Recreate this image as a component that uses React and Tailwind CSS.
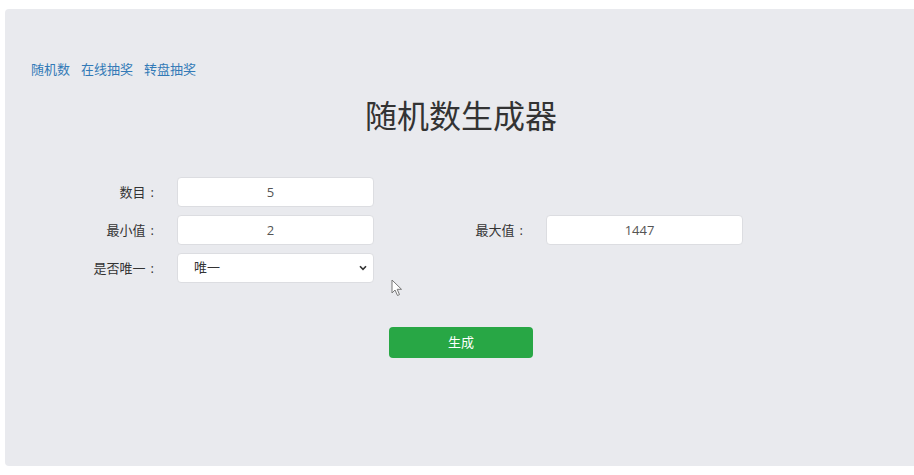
import React from "react";

const font = "font-['Open_Sans','Noto_Sans_CJK_SC',sans-serif]";

function Field({ label, children }) {
  return (
    <div className="flex w-[369px] items-center">
      <div className="w-[152px] pr-[1px] text-right text-[13px] leading-[18px] text-[#333]">
        {label}
        <span className="ml-[5px]">:</span>
      </div>
      <div className="ml-[22px] w-[197px]">{children}</div>
    </div>
  );
}

function TextInput({ value }) {
  return (
    <input
      type="text"
      defaultValue={value}
      className="box-border block h-[30px] w-[197px] rounded-[4px] border border-[#dcdde1] bg-white pr-[10px] text-center text-[13px] text-[#555] outline-none"
    />
  );
}

export default function App() {
  return (
    <div className={`h-[475px] w-full overflow-hidden bg-white pl-[5px] pt-[9px] ${font}`}>
      <div className="h-[457px] w-[912px] rounded-[4px] bg-[#e9eaee]">
        <div className="flex gap-[11px] pl-[26px] pt-[51px] text-[13px] leading-[18px] text-[#337ab7]">
          <a href="#">随机数</a>
          <a href="#">在线抽奖</a>
          <a href="#">转盘抽奖</a>
        </div>
        <h1 className="mt-[20px] text-center text-[32px] font-normal leading-[35px] text-[#333]">随机数生成器</h1>
        <div className="mt-[44px] flex flex-col gap-[8px]">
          <div className="flex">
            <Field label="数目">
              <TextInput value="5" />
            </Field>
          </div>
          <div className="flex">
            <Field label="最小值">
              <TextInput value="2" />
            </Field>
            <Field label="最大值">
              <TextInput value="1447" />
            </Field>
          </div>
          <div className="relative flex">
            <Field label="是否唯一">
              <div className="relative">
                <select className="box-border block h-[30px] w-[197px] appearance-none rounded-[4px] border border-[#dcdde1] bg-white pl-[16px] text-[13px] text-[#333] outline-none">
                  <option>唯一</option>
                  <option>不唯一</option>
                </select>
                <svg className="pointer-events-none absolute right-[7px] top-[12px]" width="8" height="6" viewBox="0 0 8 6">
                  <path d="M1 1.2 L4 4.4 L7 1.2" fill="none" stroke="#333" strokeWidth="1.6" />
                </svg>
              </div>
            </Field>
            <svg className="pointer-events-none absolute left-[386px] top-[26px]" width="12" height="18" viewBox="0 0 12 18">
              <path d="M1 1 L1 14 L4 11 L6.5 16.5 L8.5 15.6 L6.2 10.3 L10.5 10.3 Z" fill="#fff" stroke="#777" strokeWidth="1" strokeLinejoin="round" />
            </svg>
          </div>
        </div>
        <div className="mt-[44px] flex justify-center">
          <button className="h-[31px] w-[144px] rounded-[4px] bg-[#28a745] text-[13px] text-white">生成</button>
        </div>
      </div>
    </div>
  );
}
